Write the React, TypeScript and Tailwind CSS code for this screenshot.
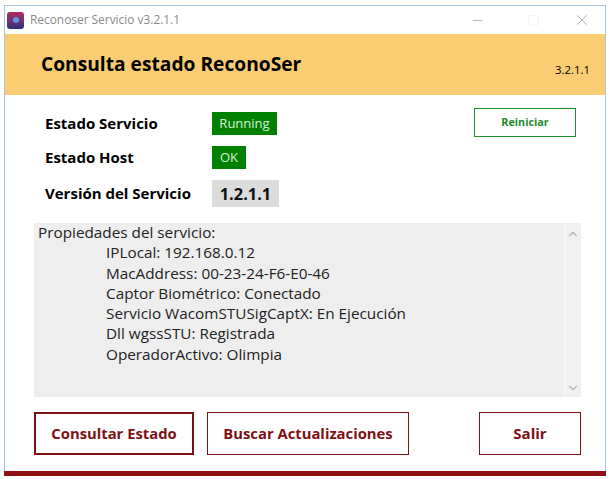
import { ChevronDown, ChevronUp, Minus, Square, X } from 'lucide-react';

const props = [
  'IPLocal: 192.168.0.12',
  'MacAddress: 00-23-24-F6-E0-46',
  'Captor Biométrico: Conectado',
  'Servicio WacomSTUSigCaptX: En Ejecución',
  'Dll wgssSTU: Registrada',
  'OperadorActivo: Olimpia',
];

function StatusRow({ label, children }: { label: string; children: React.ReactNode }) {
  return (
    <div className="flex items-center">
      <div className="w-[167px] text-[15px] font-bold text-black">{label}</div>
      {children}
    </div>
  );
}

export default function App() {
  return (
    <div className="w-[611px] h-[479px] bg-white pl-1 pr-[5px] pt-[5px] pb-[3px] font-['Open_Sans',sans-serif] overflow-hidden">
      <div className="h-full flex flex-col border-x border-t border-[#a9c6de] bg-white">
        <div className="h-[28px] flex items-center pl-[2px] shrink-0">
          <div className="w-[17px] h-[17px] rounded-[3px] bg-gradient-to-b from-[#b0245c] to-[#2d2a80] flex items-center justify-center">
            <div className="w-[6px] h-[6px] rounded-full bg-[#6a8fe0]" />
          </div>
          <span className="ml-[6px] text-[11.9px] text-[#8a8a8a]">Reconoser Servicio v3.2.1.1</span>
          <div className="ml-auto flex items-center text-[#8f8f8f]">
            <Minus className="w-[15px] h-[15px]" strokeWidth={1} />
            <Square className="w-[13px] h-[13px] ml-[42px] text-[#e8e8e8]" strokeWidth={1} />
            <X className="w-[18px] h-[18px] ml-[33px] mr-[14px]" strokeWidth={0.9} />
          </div>
        </div>

        <div className="h-[61px] bg-[#fbcd72] flex pl-[36px] pr-[15px] shrink-0">
          <h1 className="mt-[17px] text-[19.2px] leading-[26px] font-bold text-black">Consulta estado ReconoSer</h1>
          <span className="ml-auto mt-[29px] text-[11.4px] leading-[14px] text-black">3.2.1.1</span>
        </div>

        <div className="flex-1 flex flex-col pl-[29px] pr-[24px] min-h-0">
          <div className="flex justify-between h-[128px] pt-[13px] pl-[11px] pr-[5px] shrink-0">
            <div className="flex flex-col gap-[11px] items-start mt-[4px]">
              <StatusRow label="Estado Servicio">
                <span className="h-[23px] w-[65px] bg-[#008000] text-[#d9f0d9] text-[13px] leading-[23px] text-center">Running</span>
              </StatusRow>
              <StatusRow label="Estado Host">
                <span className="h-[23px] w-[34px] bg-[#008000] text-[#d9f0d9] text-[13px] leading-[23px] text-center">OK</span>
              </StatusRow>
              <StatusRow label="Versión del Servicio">
                <span className="h-[27px] w-[67px] bg-[#dcdcdc] text-[16.4px] font-bold leading-[27px] text-center text-[#111]">1.2.1.1</span>
              </StatusRow>
            </div>
            <button className="w-[102px] h-[29px] border border-[#1f8a2e] text-[10.8px] font-bold text-[#1f8a2e] bg-white">Reiniciar</button>
          </div>

          <div className="h-[174px] bg-[#eeeeee] flex shrink-0">
            <div className="flex-1 pl-1 -mt-px text-[15.3px] leading-[20.3px] text-[#222]">
              <div>Propiedades del servicio:</div>
              {props.map((p) => (
                <div key={p} className="pl-[68px]">{p}</div>
              ))}
            </div>
            <div className="w-[17px] bg-[#f0f0f0] border-l border-[#f7f7f7] flex flex-col justify-between items-center pt-1 pb-[2px] text-[#b5b5b5]">
              <ChevronUp className="w-[14px] h-[14px]" strokeWidth={2} />
              <ChevronDown className="w-[14px] h-[14px]" strokeWidth={2} />
            </div>
          </div>

          <div className="flex mt-[15px] h-[43px] shrink-0">
            <button className="w-[160px] border-2 border-[#7f1014] text-[14.8px] font-bold text-[#7f1014] bg-white">Consultar Estado</button>
            <button className="w-[202px] ml-[13px] border border-[#7f1014] text-[14.8px] font-bold text-[#7f1014] bg-white">Buscar Actualizaciones</button>
            <button className="w-[102px] ml-auto border border-[#7f1014] text-[15px] font-bold text-[#7f1014] bg-white">Salir</button>
          </div>

          <div className="flex-1" />
        </div>
        <div className="h-[5px] bg-[#8f1116] shrink-0 -mx-px" />
      </div>
    </div>
  );
}
